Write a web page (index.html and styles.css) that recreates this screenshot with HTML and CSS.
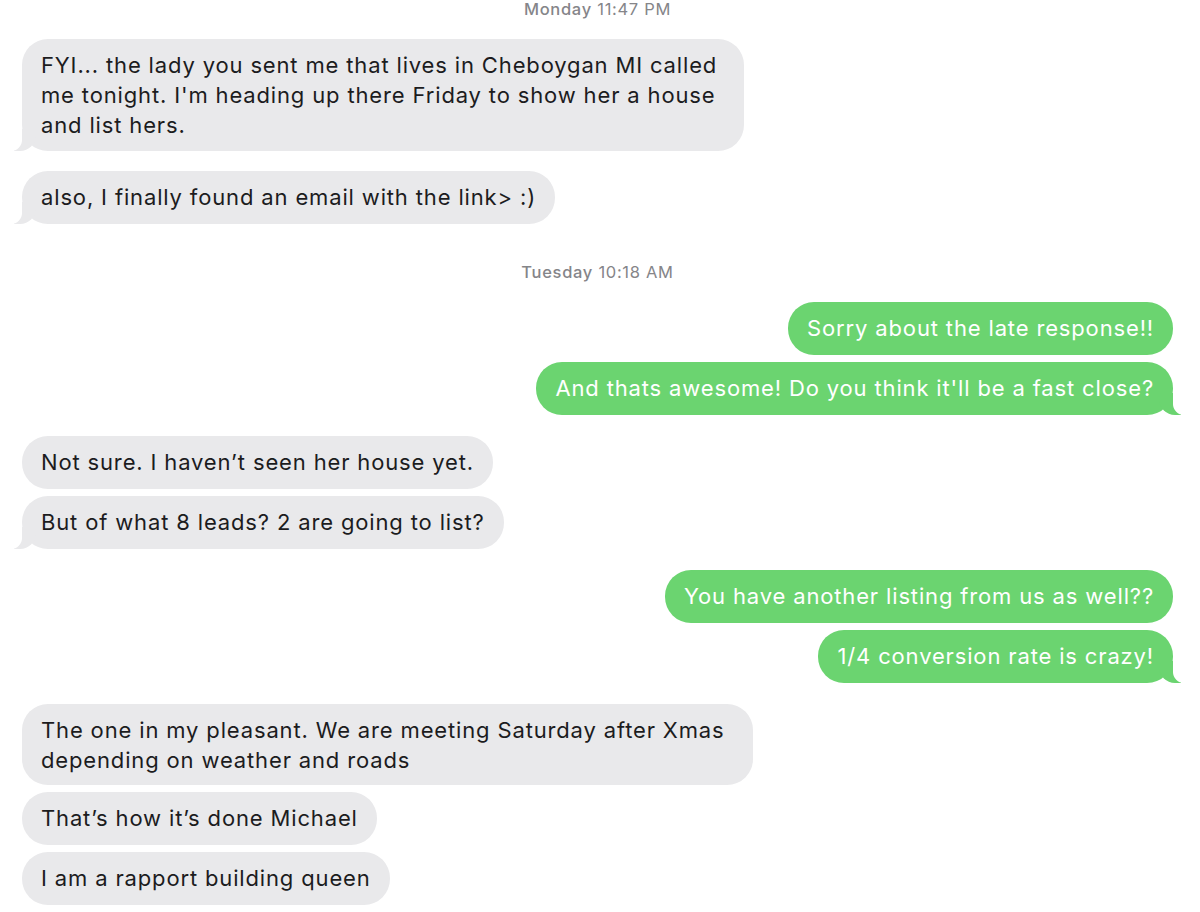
FILE: index.html
```html
<!DOCTYPE html>
<html>
<head>
<meta charset="utf-8">
<link rel="stylesheet" href="styles.css">
</head>
<body>
<div class="thread">
  <div class="stamp"><b>Monday</b> 11:47 PM</div>
  <div class="group in tight">
    <div class="bubble tail narrow">FYI... the lady you sent me that lives in Cheboygan MI called me tonight. I'm heading up there Friday to show her a house and list hers.</div>
  </div>
  <div class="group in">
    <div class="bubble tail">also, I finally found an email with the link&gt; :)</div>
  </div>
  <div class="stamp"><b>Tuesday</b> 10:18 AM</div>
  <div class="group out">
    <div class="bubble">Sorry about the late response!!</div>
    <div class="bubble tail">And thats awesome! Do you think it'll be a fast close?</div>
  </div>
  <div class="group in">
    <div class="bubble">Not sure. I haven’t seen her house yet.</div>
    <div class="bubble tail">But of what 8 leads? 2 are going to list?</div>
  </div>
  <div class="group out">
    <div class="bubble">You have another listing from us as well??</div>
    <div class="bubble tail">1/4 conversion rate is crazy!</div>
  </div>
  <div class="group in">
    <div class="bubble medium">The one in my pleasant. We are meeting Saturday after Xmas depending on weather and roads</div>
    <div class="bubble">That’s how it’s done Michael</div>
    <div class="bubble">I am a rapport building queen</div>
  </div>
</div>
</body>
</html>
```
FILE: styles.css
```css
html, body {
  margin: 0;
  padding: 0;
  background: #ffffff;
}
body {
  font-family: Inter, "Liberation Sans", sans-serif;
  width: 1200px;
  height: 912px;
  overflow: hidden;
}
.thread {
  display: flex;
  flex-direction: column;
  padding: 0 27px 0 22px;
}
.stamp {
  text-align: center;
  font-size: 16.5px;
  line-height: 18px;
  letter-spacing: 0.7px;
  color: #858589;
  margin: 18px 0 21px;
}
.stamp:first-child {
  margin-top: 0;
}
.stamp b {
  font-weight: 500;
}
.group {
  display: flex;
  flex-direction: column;
  gap: 7px;
  margin-bottom: 21px;
}
.group.tight {
  margin-bottom: 20px;
}
.group.in {
  align-items: flex-start;
}
.group.out {
  align-items: flex-end;
}
.bubble {
  position: relative;
  font-size: 22px;
  line-height: 30px;
  letter-spacing: 0.85px;
  padding: 11px 19px 12px;
  border-radius: 26px;
  max-width: 700px;
}
.bubble.narrow {
  max-width: 684px;
  padding-bottom: 11px;
}
.bubble.medium {
  max-width: 693px;
  padding-bottom: 10px;
}
.in .bubble {
  background: #e9e9eb;
  color: #1c1c1e;
}
.out .bubble {
  background: #6bd470;
  color: #ffffff;
}
.bubble.tail::before,
.bubble.tail::after {
  content: "";
  position: absolute;
  bottom: 0;
  height: 22px;
}
.in .bubble.tail::before {
  left: -8px;
  width: 22px;
  background: #e9e9eb;
  border-bottom-right-radius: 16px;
}
.in .bubble.tail::after {
  left: -11px;
  width: 11px;
  background: #ffffff;
  border-bottom-right-radius: 11px;
}
.out .bubble.tail::before {
  right: -8px;
  width: 22px;
  background: #6bd470;
  border-bottom-left-radius: 16px;
}
.out .bubble.tail::after {
  right: -11px;
  width: 11px;
  background: #ffffff;
  border-bottom-left-radius: 11px;
}
```
